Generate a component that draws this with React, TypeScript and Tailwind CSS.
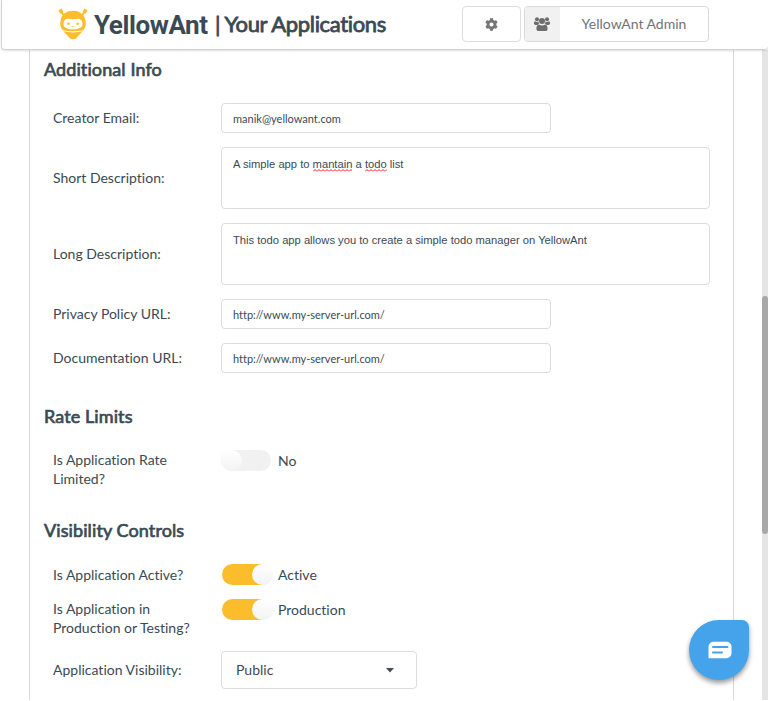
import type { ReactNode } from "react";
import { FaCog } from "react-icons/fa";

const label = "w-[177px] shrink-0 pl-[9px] text-[14px] leading-[19px]";

function Heading({ children }: { children: ReactNode }) {
  return <h3 className="h-[24px] text-[18px] leading-[22px] font-normal tracking-[0.1px] whitespace-nowrap [-webkit-text-stroke:0.7px_#3a4a54]">{children}</h3>;
}

function InputRow({ name, value }: { name: string; value: string }) {
  return (
    <div className="flex h-[30px] items-center">
      <label className={label + " pb-[2px]"}>{name}</label>
      <div className="flex h-[30px] w-[330px] items-center rounded-[4px] border border-[#dcdddd] pt-[2px] pl-[11px] text-[11px]">{value}</div>
    </div>
  );
}

function AreaRow({ name, children }: { name: string; children: ReactNode }) {
  return (
    <div className="flex h-[62px] items-center">
      <label className={label + " pb-[2px]"}>{name}</label>
      <div className="h-[62px] w-[489px] rounded-[4px] border border-[#dcdddd] pt-[9px] pl-[11px] font-['Liberation_Sans',sans-serif] text-[11.2px] leading-[14px]">
        {children}
      </div>
    </div>
  );
}

function Misspelt({ children }: { children: ReactNode }) {
  return (
    <span className="relative inline-block">
      {children}
      <svg className="absolute bottom-[-1px] left-0 h-[3px] w-full" aria-hidden="true">
        <defs>
          <pattern id="squiggle" width="4" height="3" patternUnits="userSpaceOnUse">
            <path d="M0 2.500 2 .5 4 2.500" fill="none" stroke="#f02020" strokeWidth="1" />
          </pattern>
        </defs>
        <rect width="100%" height="3" fill="url(#squiggle)" />
      </svg>
    </span>
  );
}

function Toggle({ on, text }: { on: boolean; text: string }) {
  return (
    <div className="flex h-[21px] items-center">
      <div className={on ? "ml-px flex h-[21px] w-[51px] justify-end rounded-full bg-linear-to-r from-[#fbbd2c] from-80% to-[#f3f3f3] to-80%" : "mr-[2px] flex h-[21px] w-[50px] rounded-full bg-[#f1f1f1]"}>
        <div className="h-[21px] w-[21px] rounded-full bg-linear-to-b from-white to-[#f3f3f3]" />
      </div>
      <span className="pl-[5px] text-[14px] leading-[19px]">{text}</span>
    </div>
  );
}

function AntLogo() {
  return (
    <svg className="ml-[56px] h-[32px] w-[30px] shrink-0" viewBox="0 0 30 32" fill="#fbbd2c">
      <path d="M2.4 2.8 L6.4 8.2 M27.400 2.8 L23.4 8.2" stroke="#fbbd2c" strokeWidth="2" />
      <path d="M.4 2.2 3.600.5l1.800 3.700-2.8 1.500zM29.500 2.2 26.300.5l-1.800 3.700 2.8 1.500z" />
      <path d="M2.2 15.500C2.4 7.400 7.400 2.800 15 2.800S27.600 7.400 27.800 15.500c0 2.700-.8 4.700-2.700 6.700-5.500 1.500-14.700 1.500-20.200 0C3 20.200 2.200 18.200 2.200 15.500z" />
      <path d="M5.600 23.300c5.800 1.500 13 1.500 18.800 0-1.300 1.900-3.300 3.500-4.900 5.500-1.200 1.800-2.600 2.500-4.500 2.500s-3.300-.7-4.500-2.500c-1.600-2-3.600-3.600-4.900-5.500z" />
      <path d="M5.500 16.200c0-3.700 2-5.400 4.800-5.400 1.700 0 2.900.4 4.700.4s3-.4 4.700-.4c2.800 0 4.800 1.700 4.800 5.400 0 3.300-4 5-9.500 5s-9.500-1.700-9.500-5z" fill="#fff" />
      <circle cx="10.400" cy="15.700" r="1.300" />
      <circle cx="19.600" cy="15.700" r="1.300" />
      <path d="M13.500 18.300q1.500.6 3 0" fill="none" stroke="#fbbd2c" strokeWidth=".6" />
    </svg>
  );
}

function UsersIcon() {
  return (
    <svg className="mr-px h-[14px] w-[16px]" viewBox="0 0 16 14" fill="#6d6d6d">
      <circle cx="3" cy="2.200" r="2" />
      <circle cx="13" cy="2.200" r="2" />
      <circle cx="8" cy="4" r="3" />
      <path d="M4.600 4.600C4.500 5.800 4.800 6.500 5.400 7.100 4.500 7.200 3.900 7.500 3.400 8H1.700C.6 8 0 7.500 0 6.600 0 5.500.1 4.200 1 4.200c.5.4 1.200.7 2 .7.600 0 1.200-.1 1.600-.3zM11.400 4.600c.1 1.200-.2 1.900-.8 2.500.9.1 1.500.4 2 .9h1.700c1.100 0 1.700-.5 1.700-1.400 0-1.100-.1-2.400-1-2.400-.5.4-1.200.7-2 .7-.6 0-1.200-.1-1.600-.3z" />
      <path d="M5 7.500c.9.700 1.900 1.100 3 1.100s2.100-.4 3-1.100c2 .1 2.600 2.200 2.600 4.200 0 1.400-.9 2.300-2.300 2.300H4.700c-1.400 0-2.300-.9-2.300-2.300 0-2 .6-4.100 2.600-4.200z" />
    </svg>
  );
}

export default function App() {
  return (
    <div className="relative h-[701px] w-[768px] overflow-hidden bg-white font-['Lato',sans-serif] text-[#3a4a54] [font-variant-ligatures:none]">
      <header className="relative z-10 ml-px flex h-[50px] items-start rounded-b-[4px] border-b border-l border-[#d4d4d5] bg-white shadow-[0_1px_2px_rgba(34,36,38,0.15)]">
        <div className="flex h-[48px] w-[461px] items-center whitespace-nowrap">
          <AntLogo />
          <span className="ml-[6px] w-[121px] pt-px font-['Roboto',sans-serif] text-[26px] leading-[32px] font-bold tracking-[-0.4px]">YellowAnt</span>
          <span className="text-[22px] leading-[30px] font-normal tracking-[-0.35px] [-webkit-text-stroke:0.8px_#3a4a54]">| Your Applications</span>
        </div>
        <button className="mt-[6px] -ml-px flex h-[36px] w-[59px] items-center justify-center rounded-[4px] border border-[#dcdddd] text-[#767676]">
          <FaCog size={13} />
        </button>
        <button className="mt-[6px] ml-[3px] flex h-[36px] w-[185px] overflow-hidden rounded-[4px] border border-[#d8d9d9] text-[14px] text-[#737373]">
          <span className="flex h-full w-[35px] items-center justify-center bg-[#f1f1f1]">
            <UsersIcon />
          </span>
          <span className="flex h-full flex-1 items-center justify-center pb-[2px]">YellowAnt Admin</span>
        </button>
      </header>

      <div className="flex h-[650px]">
        <main className="ml-[29px] h-full w-[705px] border-x border-[#d8d9d9] pt-[8px] pl-[14px]">
          <Heading>Additional Info</Heading>
          <div className="mt-[21px] flex flex-col gap-[14px]">
            <InputRow name="Creator Email:" value="manik@yellowant.com" />
            <AreaRow name="Short Description:">
              A simple app to <Misspelt>mantain</Misspelt> a <Misspelt>todo</Misspelt> list
            </AreaRow>
            <AreaRow name="Long Description:">This todo app allows you to create a simple todo manager on YellowAnt</AreaRow>
            <InputRow name="Privacy Policy URL:" value="http://www.my-server-url.com/" />
            <InputRow name="Documentation URL:" value="http://www.my-server-url.com/" />
          </div>
          <div className="mt-[32px]">
            <Heading>Rate Limits</Heading>
          </div>
          <div className="mt-[21px] flex h-[38px] items-start">
            <label className={label}>
              Is Application Rate
              <br />
              Limited?
            </label>
            <Toggle on={false} text="No" />
          </div>
          <div className="mt-[31px]">
            <Heading>Visibility Controls</Heading>
          </div>
          <div className="mt-[21px] flex h-[21px] items-center">
            <label className={label}>Is Application Active?</label>
            <Toggle on text="Active" />
          </div>
          <div className="mt-[14px] flex h-[38px] items-start">
            <label className={label}>
              Is Application in
              <br />
              Production or Testing?
            </label>
            <Toggle on text="Production" />
          </div>
          <div className="mt-[14px] flex h-[38px] items-center">
            <label className={label + " pb-[2px]"}>Application Visibility:</label>
            <div className="flex h-[38px] w-[196px] items-center justify-between rounded-[4px] border border-[#dcdddd] pr-[22px] pl-[14px] text-[14px]">
              <span className="pb-[2px]">Public</span>
              <svg className="h-[5px] w-[8px]" viewBox="0 0 8 5" fill="#3f4f59">
                <path d="M0 0h8L4 4.600z" />
              </svg>
            </div>
          </div>
        </main>
        <div className="ml-[28px] h-full w-[6px] bg-[#e5e5e5] pt-[246px]">
          <div className="h-[238px] w-[6px] rounded-[3px] bg-[#a8a8a8]" />
        </div>
      </div>

      <button className="absolute top-[620px] left-[689px] flex h-[60px] w-[60px] items-center justify-center rounded-[30px] rounded-tr-[7px] bg-[#45a3ec] pl-[2px] shadow-[0_3px_5px_rgba(0,0,0,0.4)]">
        <svg className="h-[18px] w-[24px]" viewBox="0 0 24 18">
          <path d="M5.500.8h13a5 5 0 0 1 5 5v6.400a5 5 0 0 1-5 5H.5V5.800a5 5 0 0 1 5-5z" fill="#fff" />
          <path d="M5 6.100h14.500M5 11.600h9" stroke="#45a3ec" strokeWidth="2" strokeLinecap="round" />
        </svg>
      </button>
    </div>
  );
}
